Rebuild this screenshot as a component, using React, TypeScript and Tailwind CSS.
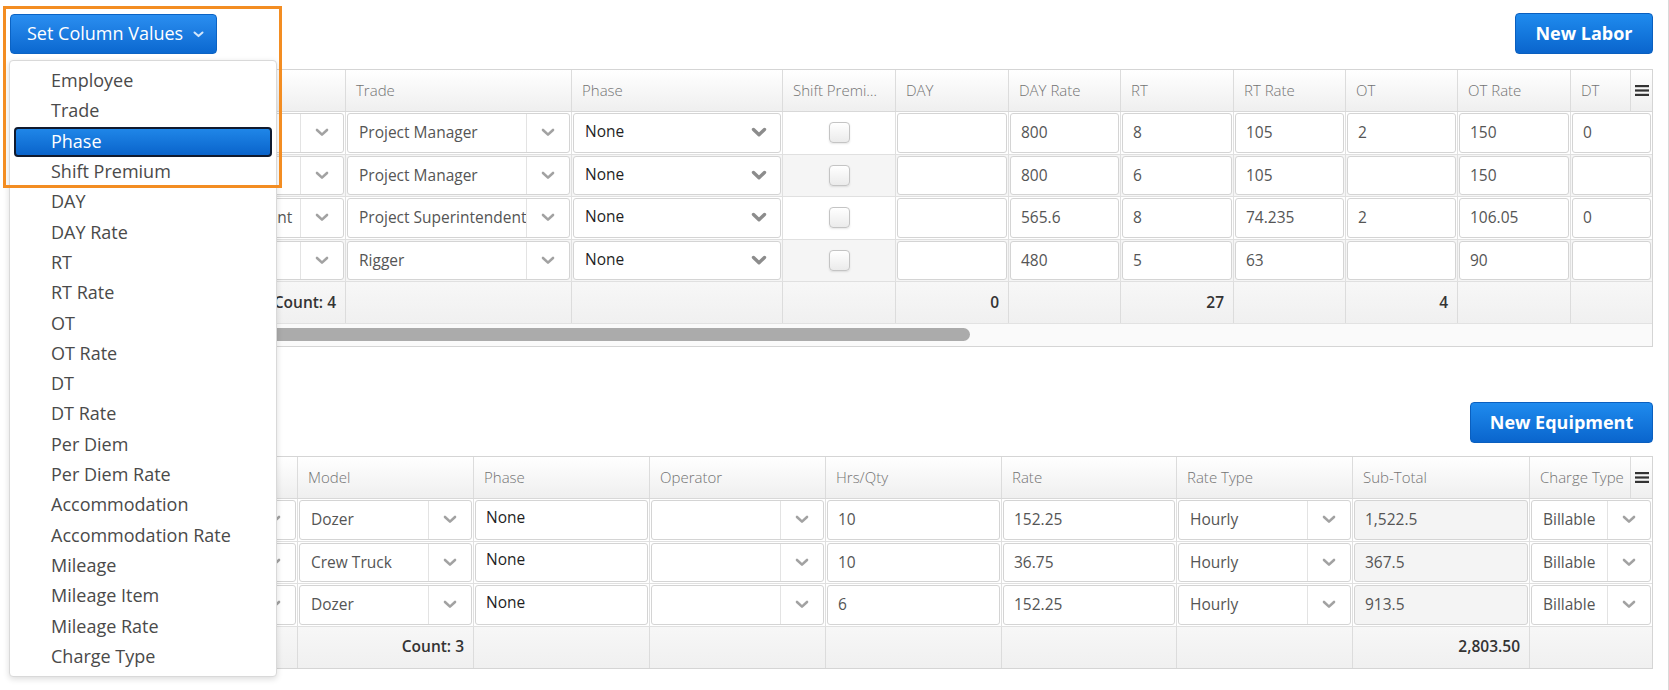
import React from "react";

type Kind = "sel" | "phase" | "num" | "ro" | "chk" | "txt";
type Cell = { k: Kind; v?: string };

const Chev = () => (
  <svg width="14" height="9" viewBox="0 0 14 9" className="block">
    <path d="M2 2l5 4.6L12 2" fill="none" stroke="#a2a2a2" strokeWidth="2.6" strokeLinecap="round" strokeLinejoin="round" />
  </svg>
);

const ChevBold = () => (
  <svg width="16" height="11" viewBox="0 0 16 11" className="block">
    <path d="M2.5 2.5l5.5 5.2 5.5-5.2" fill="none" stroke="#8c8c8c" strokeWidth="3.4" strokeLinecap="round" strokeLinejoin="round" />
  </svg>
);

const MenuIcon = () => (
  <svg width="14" height="11" viewBox="0 0 14 11" className="block">
    <rect x="0" y="0" width="14" height="2.2" fill="#333" />
    <rect x="0" y="4.4" width="14" height="2.2" fill="#333" />
    <rect x="0" y="8.8" width="14" height="2.2" fill="#333" />
  </svg>
);

const BodyCell = ({ c, last }: { c: Cell; last: boolean }) => {
  const edge = last ? "" : "border-r";
  if (c.k === "chk") {
    return (
      <div className={`flex items-center justify-center border-b border-[#e0e0e0] ${edge}`}>
        <span className="h-[21px] w-[21px] rounded-[4px] border border-[#c4c4c4] bg-gradient-to-b from-white to-[#ebebeb] shadow-[0_1px_2px_rgba(0,0,0,0.1)]" />
      </div>
    );
  }
  let inner: React.ReactNode;
  if (c.k === "sel") {
    inner = (
      <div className="flex h-full rounded-[3px] border border-[#d4d4d4] bg-white">
        <div className="flex min-w-0 flex-1 items-center overflow-hidden whitespace-nowrap pl-[11px] text-[#555]">{c.v}</div>
        <div className="flex w-[43px] shrink-0 items-center justify-center border-l border-[#e3e3e3]">
          <Chev />
        </div>
      </div>
    );
  } else if (c.k === "phase") {
    inner = (
      <div className="flex h-full items-center justify-between rounded-[3px] border border-[#d4d4d4] bg-white pl-[11px] pr-[13px] text-[#1f1f1f]">
        <span className="pb-[2px]">{c.v}</span>
        <ChevBold />
      </div>
    );
  } else if (c.k === "txt") {
    inner = (
      <div className="flex h-full items-center rounded-[3px] border border-[#d4d4d4] bg-white pb-[5px] pl-[10px] text-[#1f1f1f]">{c.v}</div>
    );
  } else {
    inner = (
      <div
        className={`flex h-full items-center rounded-[3px] border border-[#d4d4d4] pl-[10px] text-[#555] ${
          c.k === "ro" ? "bg-[#f4f4f4]" : "bg-white"
        }`}
      >
        {c.v}
      </div>
    );
  }
  return <div className={`border-b border-[#e0e0e0] p-px ${edge}`}>{inner}</div>;
};

const HeaderCell = ({ t, last }: { t: string; last: boolean }) => (
  <div className={`flex min-w-0 items-center border-[#dcdcdc] ${last ? "" : "border-r"}`}>
    <span className={`min-w-0 flex-1 truncate pl-[10px] pb-[1px] ${last ? "pr-[2px]" : "pr-[14px]"}`}>{t}</span>
    {last && (
      <span className="flex h-full w-[22px] shrink-0 items-center justify-center border-l border-[#dcdcdc]">
        <MenuIcon />
      </span>
    )}
  </div>
);

const FooterCell = ({ v, last }: { v?: string; last: boolean }) => (
  <div className={`flex items-center justify-end border-[#dcdcdc] pr-[9px] font-semibold text-[#333] ${last ? "" : "border-r"}`}>
    {v}
  </div>
);

const laborHead = ["Employee", "Trade", "Phase", "Shift Premium", "DAY", "DAY Rate", "RT", "RT Rate", "OT", "OT Rate", "DT"];

const laborRows: string[][] = [
  ["Johnson, Mark", "Project Manager", "None", "", "", "800", "8", "105", "2", "150", "0"],
  ["Davis, Susan", "Project Manager", "None", "", "", "800", "6", "105", "", "150", ""],
  ["Richardson, Marcus - Superintendent", "Project Superintendent", "None", "", "", "565.6", "8", "74.235", "2", "106.05", "0"],
  ["Miller, Tom", "Rigger", "None", "", "", "480", "5", "63", "", "90", ""],
];

const laborKinds: Kind[] = ["sel", "sel", "phase", "chk", "num", "num", "num", "num", "num", "num", "num"];
const laborFoot = ["Count: 4", "", "", "", "0", "", "27", "", "4", "", ""];

const equipHead = ["Equipment", "Model", "Phase", "Operator", "Hrs/Qty", "Rate", "Rate Type", "Sub-Total", "Charge Type"];

const equipRows: string[][] = [
  ["CAT D6", "Dozer", "None", "", "10", "152.25", "Hourly", "1,522.5", "Billable"],
  ["F-250", "Crew Truck", "None", "", "10", "36.75", "Hourly", "367.5", "Billable"],
  ["CAT D8", "Dozer", "None", "", "6", "152.25", "Hourly", "913.5", "Billable"],
];

const equipKinds: Kind[] = ["sel", "sel", "txt", "sel", "num", "num", "sel", "ro", "sel"];
const equipFoot = ["", "Count: 3", "", "", "", "", "", "2,803.50", ""];

const menuItems = [
  "Employee",
  "Trade",
  "Phase",
  "Shift Premium",
  "DAY",
  "DAY Rate",
  "RT",
  "RT Rate",
  "OT",
  "OT Rate",
  "DT",
  "DT Rate",
  "Per Diem",
  "Per Diem Rate",
  "Accommodation",
  "Accommodation Rate",
  "Mileage",
  "Mileage Item",
  "Mileage Rate",
  "Charge Type",
];

const LaborGrid = () => {
  const cols = "grid grid-cols-[335px_226px_211px_113px_113px_112px_113px_112px_112px_113px_81px]";
  return (
    <div className="mt-[15px] overflow-hidden border border-[#d5d5d5] text-[15.5px]">
      <div className={`${cols} h-[42px] border-b border-[#d8d8d8] bg-gradient-to-b from-white to-[#efefef] text-[15px] font-light text-[#737373]`}>
        {laborHead.map((t, i) => (
          <HeaderCell key={t} t={t} last={i === laborHead.length - 1} />
        ))}
      </div>
      {laborRows.map((r, ri) => (
        <div key={ri} className={`${cols} h-[42.5px] ${ri % 2 === 1 ? "bg-[#f5f5f5]" : "bg-white"}`}>
          {r.map((v, i) => (
            <BodyCell key={i} c={{ k: laborKinds[i], v }} last={i === r.length - 1} />
          ))}
        </div>
      ))}
      <div className={`${cols} h-[41px] bg-gradient-to-b from-[#f7f7f7] to-[#f0f0f0]`}>
        {laborFoot.map((v, i) => (
          <FooterCell key={i} v={v} last={i === laborFoot.length - 1} />
        ))}
      </div>
      <div className="h-[23px] border-t border-[#e2e2e2] bg-[#fafafa] pt-[4px] pl-[4px]">
        <div className="h-[13px] w-[955px] rounded-full bg-[#ababab]" />
      </div>
    </div>
  );
};

const EquipmentGrid = () => {
  const cols = "grid grid-cols-[287px_176px_176px_176px_176px_175px_176px_177px_122px]";
  return (
    <div className="mt-[13px] overflow-hidden border border-[#d5d5d5] text-[15.5px]">
      <div className={`${cols} h-[42px] border-b border-[#d8d8d8] bg-gradient-to-b from-white to-[#efefef] text-[15px] font-light text-[#737373]`}>
        {equipHead.map((t, i) => (
          <HeaderCell key={t} t={t} last={i === equipHead.length - 1} />
        ))}
      </div>
      {equipRows.map((r, ri) => (
        <div key={ri} className={`${cols} h-[42.5px] bg-white`}>
          {r.map((v, i) => (
            <BodyCell key={i} c={{ k: equipKinds[i], v }} last={i === r.length - 1} />
          ))}
        </div>
      ))}
      <div className={`${cols} h-[41px] bg-gradient-to-b from-[#f7f7f7] to-[#f0f0f0]`}>
        {equipFoot.map((v, i) => (
          <FooterCell key={i} v={v} last={i === equipFoot.length - 1} />
        ))}
      </div>
    </div>
  );
};

const App = () => {
  return (
    <div className="relative h-[690px] w-full overflow-hidden border-r border-[#d9d9d9] bg-white pl-[10px] pr-[15px] pt-[13px] font-['Open_Sans',sans-serif]">
      <div className="flex h-[41px] items-start justify-between">
        <button className="mt-px flex h-[40px] w-[207px] items-center gap-[10px] rounded-[4px] border border-[#0b63c4] bg-gradient-to-b from-[#2a8ef0] to-[#0a68d0] pl-[16px] text-[18px] text-white">
          <span className="pb-[1px]">Set Column Values</span>
          <svg width="11" height="7" viewBox="0 0 11 7" className="block">
            <path d="M1.5 1.5l4 3.6 4-3.6" fill="none" stroke="#d3e6fb" strokeWidth="2" strokeLinecap="round" strokeLinejoin="round" />
          </svg>
        </button>
        <button className="h-[41px] w-[138px] rounded-[4px] border border-[#0a5fbf] bg-gradient-to-b from-[#1f8bee] to-[#0a65cd] pb-[1px] text-[18px] font-bold text-white">
          New Labor
        </button>
      </div>

      <LaborGrid />

      <div className="mt-[55px] flex justify-end">
        <button className="h-[41px] w-[183px] rounded-[4px] border border-[#0a5fbf] bg-gradient-to-b from-[#1f8bee] to-[#0a65cd] pb-[1px] text-[18px] font-bold text-white">
          New Equipment
        </button>
      </div>

      <EquipmentGrid />

      {/* open dropdown of Set Column Values */}
      <div className="absolute left-[9px] top-[60px] h-[617px] w-[268px] rounded-[4px] border border-[#d9d9d9] bg-white py-[5px] shadow-[0_2px_6px_rgba(0,0,0,0.14)]">
        {menuItems.map((m) => (
          <div
            key={m}
            className={`mx-[4px] flex h-[30.3px] items-center rounded-[4px] border-2 pl-[35px] text-[18px] ${
              m === "Phase"
                ? "border-[#101a2e] bg-gradient-to-b from-[#1f86e8] to-[#0a64cb] text-white"
                : "border-transparent text-[#4a4a4a]"
            }`}
          >
            <span className="pb-[1px]">{m}</span>
          </div>
        ))}
      </div>

      {/* highlight annotation */}
      <div className="pointer-events-none absolute left-[3px] top-[6px] h-[182px] w-[279px] border-[3px] border-[#f38d22]" />
    </div>
  );
};

export default App;
